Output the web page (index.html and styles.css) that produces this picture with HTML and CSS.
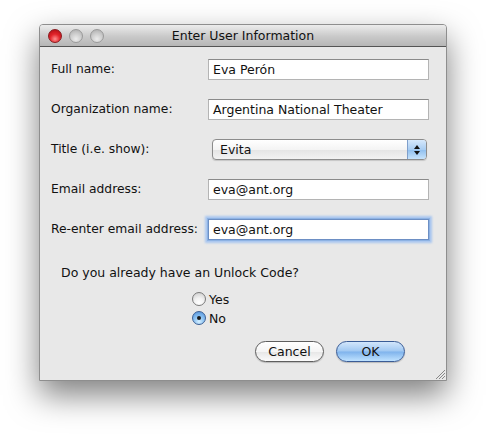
FILE: index.html
```html
<!DOCTYPE html>
<html>
<head>
<meta charset="utf-8">
<link rel="stylesheet" href="styles.css">
</head>
<body>
<div class="window">
  <div class="titlebar">
    <div class="lights">
      <span class="light red"></span>
      <span class="light gray"></span>
      <span class="light gray"></span>
    </div>
    <div class="title">Enter User Information</div>
  </div>
  <div class="content">
    <div class="form">
      <label class="lbl">Full name:</label>
      <div class="field">Eva Perón</div>
      <label class="lbl">Organization name:</label>
      <div class="field">Argentina National Theater</div>
      <label class="lbl">Title (i.e. show):</label>
      <div class="popup"><span class="popup-text">Evita</span><span class="popup-arrows"><svg width="8" height="12" viewBox="0 0 8 12"><path d="M4 1 L7 5 L1 5 Z M4 11 L7 7 L1 7 Z" fill="#111"/></svg></span></div>
      <label class="lbl">Email address:</label>
      <div class="field">eva@ant.org</div>
      <label class="lbl">Re-enter email address:</label>
      <div class="field focus">eva@ant.org</div>
    </div>
    <div class="question">Do you already have an Unlock Code?</div>
    <div class="radios">
      <div class="radio-row"><span class="radio"></span><span>Yes</span></div>
      <div class="radio-row"><span class="radio on"><span class="dot"></span></span><span>No</span></div>
    </div>
    <div class="buttons">
      <div class="btn cancel">Cancel</div>
      <div class="btn ok">OK</div>
    </div>
  </div>
  <svg class="grip" width="10" height="10" viewBox="0 0 10 10"><path d="M10 1 L1 10 M10 4 L4 10 M10 7 L7 10" stroke="#888" stroke-width="1"/></svg>
</div>
</body>
</html>
```
FILE: styles.css
```css
html, body {
  margin: 0;
  padding: 0;
  background: #ffffff;
}
html {
  height: 100%;
}
body {
  min-height: 100%;
  box-sizing: border-box;
  font-family: "DejaVu Sans", "Noto Sans", sans-serif;
  font-size: 12px;
  color: #111;
  padding-top: 24px;
  padding-left: 39px;
  padding-bottom: 50px;
}
.window {
  position: relative;
  width: 406px;
  height: 355px;
  border: 1px solid #8e8e8e;
  border-radius: 4px 4px 0 0;
  background: #e8e8e8;
  box-shadow: 0 14px 32px rgba(0,0,0,0.5);
  overflow: hidden;
}
.titlebar {
  position: relative;
  height: 21px;
  background: linear-gradient(#ececec, #c9c9c9 55%, #b6b6b6);
  border-bottom: 1px solid #545454;
  display: flex;
  align-items: center;
}
.lights {
  display: flex;
  gap: 7px;
  padding-left: 8px;
}
.light {
  width: 14px;
  height: 14px;
  border-radius: 50%;
  box-sizing: border-box;
}
.light.red {
  background: radial-gradient(circle at 50% 75%, #ff8f8f 0%, #e2242a 45%, #a90c12 100%);
  border: 1px solid #8a1a1e;
}
.light.gray {
  background: radial-gradient(circle at 50% 75%, #ececec 0%, #cdcdcd 50%, #a9a9a9 100%);
  border: 1px solid #9a9a9a;
}
.title {
  position: absolute;
  left: 0;
  right: 0;
  top: 0;
  line-height: 22px;
  text-align: center;
  font-size: 12.5px;
  color: #111;
}
.content {
  padding: 12px 0 0 11px;
}
.form {
  display: grid;
  grid-template-columns: 157px 221px;
  grid-auto-rows: 21px;
  row-gap: 19px;
  align-items: center;
}
.lbl {
  font-size: 12.3px;
  padding-bottom: 2px;
}
.field {
  height: 21px;
  box-sizing: border-box;
  background: #fff;
  border: 1px solid #b4b4b4;
  border-top-color: #8a8a8a;
  padding: 0 4px;
  line-height: 20px;
  font-size: 12.5px;
}
.field.focus {
  box-shadow: 0 0 0 1px #8db2e3, 0 0 2px 3px #a9c6ef;
  border-color: #6d8fc4;
}
.popup {
  height: 21px;
  margin-left: 4px;
  margin-right: 2px;
  box-sizing: border-box;
  border: 1px solid #8c8c8c;
  border-radius: 4px;
  background: linear-gradient(#ffffff, #f4f4f4 50%, #e4e4e4 51%, #f2f2f2);
  display: flex;
  align-items: center;
  justify-content: space-between;
  overflow: hidden;
  box-shadow: 0 1px 1px rgba(0,0,0,0.15);
}
.popup-text {
  padding-left: 7px;
  font-size: 12.5px;
  color: #111;
}
.popup-arrows {
  width: 18px;
  height: 100%;
  display: flex;
  align-items: center;
  justify-content: center;
  background: linear-gradient(#d6e8fb, #a9cdf2 50%, #8ebeee 51%, #c7e3fb);
  border-left: 1px solid #7f9fcb;
}
.question {
  margin-top: 25px;
  padding-left: 10px;
  line-height: 16px;
  font-size: 12.5px;
}
.radios {
  margin-top: 10px;
  padding-left: 141px;
  display: flex;
  flex-direction: column;
  gap: 3px;
}
.radio-row {
  display: flex;
  align-items: center;
  gap: 3px;
  height: 16px;
  font-size: 12.5px;
}
.radio {
  width: 14px;
  height: 14px;
  box-sizing: border-box;
  border-radius: 50%;
  border: 1px solid #7a7a7a;
  background: radial-gradient(circle at 50% 80%, #ffffff 0%, #f2f2f2 40%, #c9c9c9 100%);
  display: flex;
  align-items: center;
  justify-content: center;
}
.radio.on {
  border-color: #3b5f94;
  background: radial-gradient(circle at 50% 80%, #d6f0ff 0%, #8cc2f2 45%, #4f8fd8 100%);
}
.dot {
  width: 4px;
  height: 4px;
  border-radius: 50%;
  background: #1a1a1a;
}
.buttons {
  margin-top: 15px;
  padding-left: 204px;
  display: flex;
  gap: 12px;
}
.btn {
  width: 69px;
  height: 21px;
  box-sizing: border-box;
  border-radius: 11px;
  text-align: center;
  line-height: 19px;
  font-size: 12.5px;
}
.btn.cancel {
  border: 1px solid #5e5e5e;
  background: linear-gradient(#ffffff, #f5f5f5 50%, #e6e6e6 51%, #fbfbfb);
  box-shadow: 0 1px 1px rgba(0,0,0,0.2);
}
.btn.ok {
  border: 1px solid #3a5c96;
  background: linear-gradient(#d2e6fb, #a0c8f2 48%, #7fb3ec 52%, #bfe2ff);
  box-shadow: 0 1px 1px rgba(0,0,0,0.2);
}
.grip {
  position: absolute;
  right: 1px;
  bottom: 1px;
}
```
